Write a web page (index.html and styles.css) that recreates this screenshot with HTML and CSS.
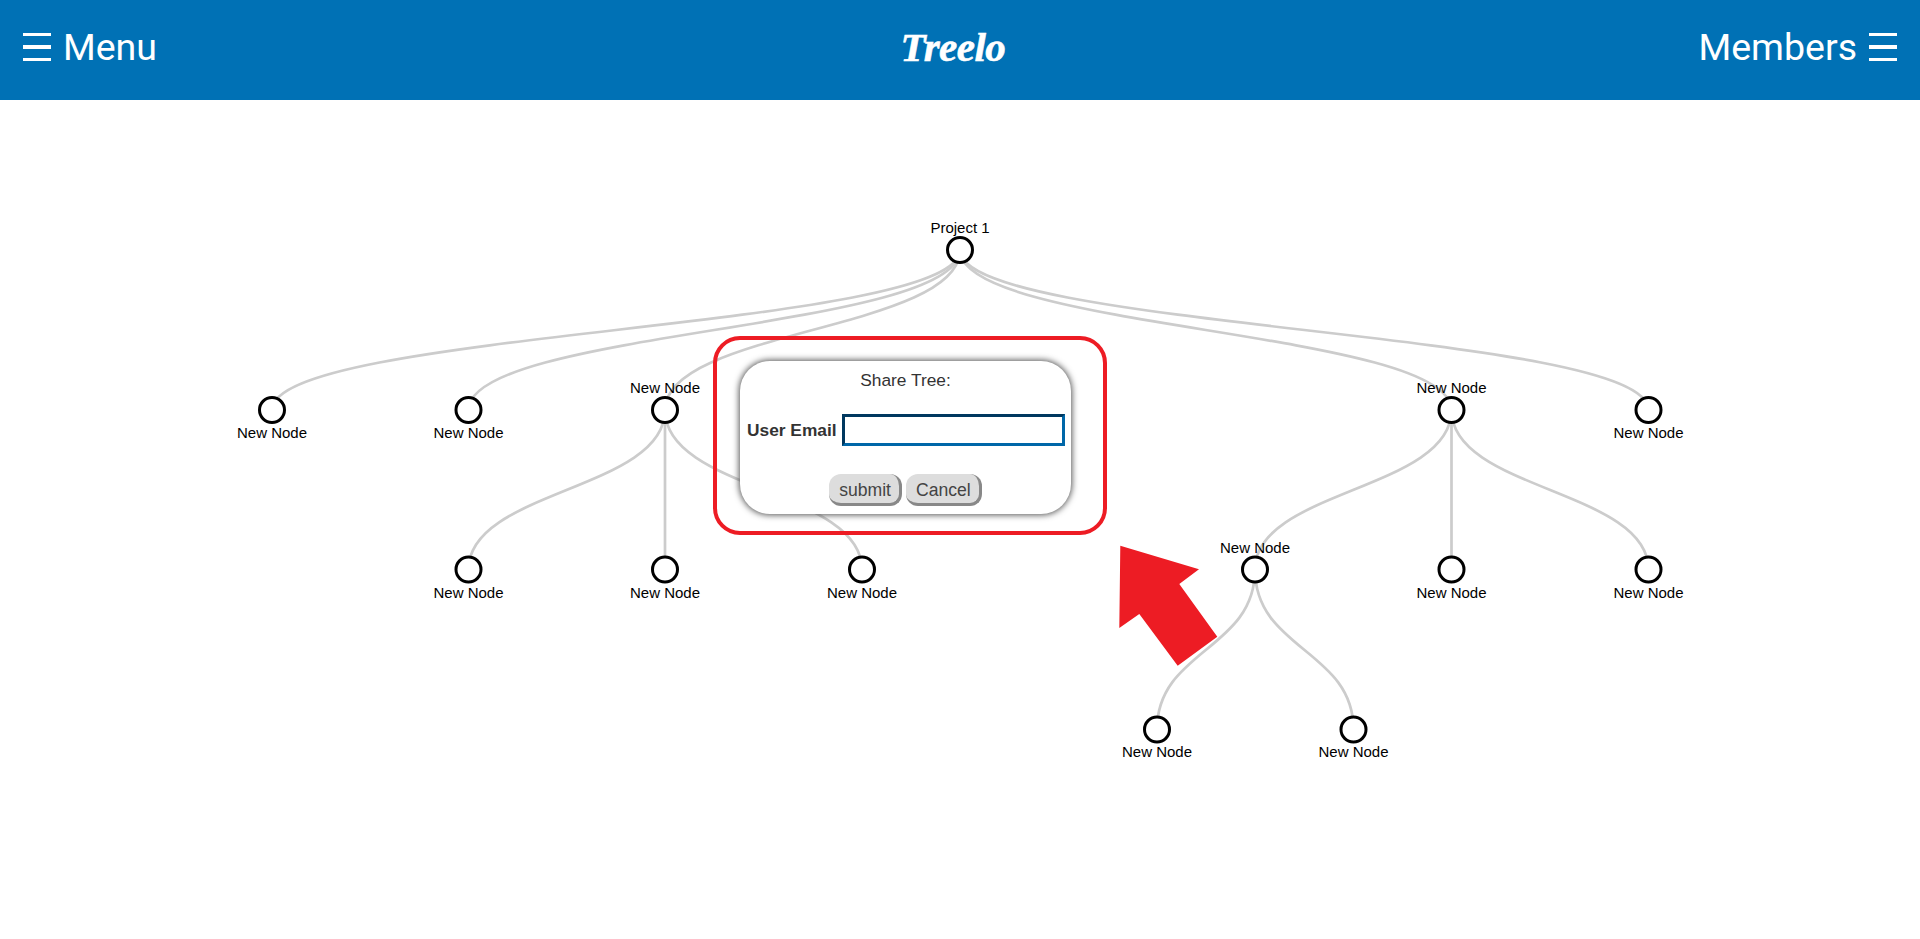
FILE: index.html
```html
<!DOCTYPE html>
<html lang="en">
<head>
<meta charset="utf-8">
<title>Treelo</title>
<link rel="stylesheet" href="styles.css">
</head>
<body>
<header class="topbar">
  <div class="nav-item"><span class="burger"><i></i><i></i><i></i></span><span>Menu</span></div>
  <div class="logo">Treelo</div>
  <div class="nav-item nav-right"><span>Members</span><span class="burger"><i></i><i></i><i></i></span></div>
</header>
<main class="canvas">
  <svg class="tree" width="1920" height="839" viewBox="0 100 1920 839">
    <g class="links">
      <path d="M960,250C960,330 272,330 272,410"/>
      <path d="M960,250C960,330 468.5,330 468.5,410"/>
      <path d="M960,250C960,330 665,330 665,410"/>
      <path d="M960,250C960,330 1451.5,330 1451.5,410"/>
      <path d="M960,250C960,330 1648.5,330 1648.5,410"/>
      <path d="M665,410C665,490 468.5,490 468.5,569.5"/>
      <path d="M665,410C665,490 665,490 665,569.5"/>
      <path d="M665,410C665,490 862,490 862,569.5"/>
      <path d="M1451.5,410C1451.5,490 1255,490 1255,569.5"/>
      <path d="M1451.5,410C1451.5,490 1451.5,490 1451.5,569.5"/>
      <path d="M1451.5,410C1451.5,490 1648.5,490 1648.5,569.5"/>
      <path d="M1255,569.5C1255,650 1157,650 1157,729.5"/>
      <path d="M1255,569.5C1255,650 1353.5,650 1353.5,729.5"/>
    </g>
    <g class="nodes">
      <circle cx="960" cy="250" r="12.5"/>
      <circle cx="272" cy="410" r="12.5"/>
      <circle cx="468.5" cy="410" r="12.5"/>
      <circle cx="665" cy="410" r="12.5"/>
      <circle cx="1451.5" cy="410" r="12.5"/>
      <circle cx="1648.5" cy="410" r="12.5"/>
      <circle cx="468.5" cy="569.5" r="12.5"/>
      <circle cx="665" cy="569.5" r="12.5"/>
      <circle cx="862" cy="569.5" r="12.5"/>
      <circle cx="1255" cy="569.5" r="12.5"/>
      <circle cx="1451.5" cy="569.5" r="12.5"/>
      <circle cx="1648.5" cy="569.5" r="12.5"/>
      <circle cx="1157" cy="729.5" r="12.5"/>
      <circle cx="1353.5" cy="729.5" r="12.5"/>
    </g>
    <g class="labels">
      <text x="960" y="233">Project 1</text>
      <text x="272" y="437.5">New Node</text>
      <text x="468.5" y="437.5">New Node</text>
      <text x="665" y="392.5">New Node</text>
      <text x="1451.5" y="392.5">New Node</text>
      <text x="1648.5" y="437.5">New Node</text>
      <text x="468.5" y="597.5">New Node</text>
      <text x="665" y="597.5">New Node</text>
      <text x="862" y="597.5">New Node</text>
      <text x="1255" y="552.5">New Node</text>
      <text x="1451.5" y="597.5">New Node</text>
      <text x="1648.5" y="597.5">New Node</text>
      <text x="1157" y="757">New Node</text>
      <text x="1353.5" y="757">New Node</text>
    </g>
  </svg>

  <form class="share-modal">
    <div class="share-title">Share Tree:</div>
    <div class="share-row">
      <label class="share-label" for="email">User Email</label>
      <input class="share-input" id="email" type="text">
    </div>
    <div class="share-actions">
      <button class="share-btn" type="button">submit</button>
      <button class="share-btn" type="button">Cancel</button>
    </div>
  </form>

  <div class="callout-box"></div>
  <svg class="callout-arrow" width="100" height="122" viewBox="1119 545 100 122">
    <polygon points="1120.3,545.7 1199,569.3 1179.3,584 1217.3,636.7 1177.7,665.7 1139.3,614 1119.3,628"/>
  </svg>
</main>
</body>
</html>
```
FILE: styles.css
```css
* { box-sizing: border-box; }
html, body { margin: 0; height: 100%; overflow: hidden; background: #fff; }
body { font-family: "Liberation Sans", Arial, sans-serif; }

.topbar {
  height: 100px;
  background: #0071b5;
  color: #fff;
  display: grid;
  grid-template-columns: 1fr auto 1fr;
  align-items: center;
  padding: 0 23px 6px;
  font-family: Roboto, sans-serif;
  font-size: 37.5px;
}
.nav-item { display: flex; align-items: center; gap: 12px; }
.nav-right { justify-content: flex-end; gap: 12px; }
.burger { display: flex; flex-direction: column; gap: 9px; width: 28px; }
.burger i { display: block; height: 3.5px; background: #fff; }
.logo {
  font-family: "Liberation Serif", serif;
  font-style: italic;
  font-weight: 700;
  font-size: 41px;
  letter-spacing: -0.5px;
  margin-right: 14px;
  -webkit-text-stroke: 0.6px #fff;
}

.canvas { position: relative; height: 839px; }
.tree { display: block; }
.links path { fill: none; stroke: #ccc; stroke-width: 2.7px; }
.nodes circle { fill: #fff; stroke: #000; stroke-width: 3px; }
.labels text { font-size: 15px; text-anchor: middle; fill: #000; }

.share-modal {
  position: absolute;
  left: 740px;
  top: 261px;
  width: 331px;
  height: 153px;
  padding-top: 9px;
  background: #fff;
  border-radius: 30px;
  box-shadow: 0 0 6px 1px #555;
  color: #333;
  font-size: 17.33px;
  display: flex;
  flex-direction: column;
}
.share-title { text-align: center; line-height: 20px; }
.share-row { display: flex; align-items: center; gap: 5px; margin: 24px 0 0 7px; }
.share-label { font-weight: 700; }
.share-input {
  width: 223px;
  height: 32px;
  border: 3px solid;
  border-color: #00385f #0067a8 #0067a8 #00385f;
  border-radius: 0;
  padding: 0;
  background: #fff;
  outline: none;
}
.share-actions { display: flex; justify-content: center; gap: 4px; margin-top: 28px; }
.share-btn {
  height: 32px;
  padding: 3px 8px 0 10px;
  font: inherit;
  font-size: 17.6px;
  color: #444;
  background: #ddd;
  border: 0;
  border-right: 3px solid #888;
  border-bottom: 3px solid #888;
  border-radius: 12px;
}

.callout-box {
  position: absolute;
  left: 713px;
  top: 236px;
  width: 394px;
  height: 199px;
  border: 4px solid #ed1c24;
  border-radius: 27px;
}
.callout-arrow { position: absolute; left: 1119px; top: 445px; }
.callout-arrow polygon { fill: #ed1c24; }
```
